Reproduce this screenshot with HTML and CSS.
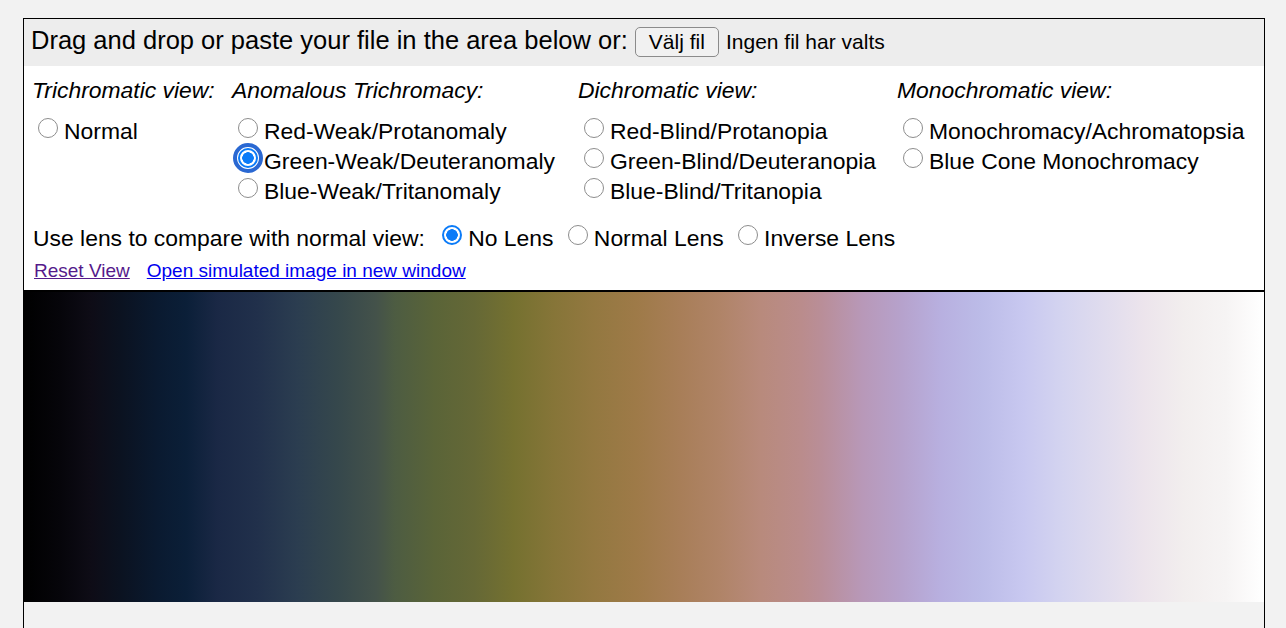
FILE: index.html
```html
<!DOCTYPE html>
<html lang="en">
<head>
<meta charset="utf-8">
<title>Color Blindness Simulator</title>
<link rel="stylesheet" href="styles.css">
</head>
<body>
<div class="app">
  <div class="drop-bar">Drag and drop or paste your file in the area below or: <button class="file-btn" type="button">Välj fil</button> <span class="file-name">Ingen fil har valts</span></div>
  <div class="controls">
    <div class="modes">
      <div class="mode-col">
        <div class="mode-title">Trichromatic view:</div>
        <label class="opt"><input class="radio" type="radio" name="mode">Normal</label>
      </div>
      <div class="mode-col">
        <div class="mode-title">Anomalous Trichromacy:</div>
        <label class="opt"><input class="radio" type="radio" name="mode">Red-Weak/Protanomaly</label>
        <label class="opt"><input class="radio focused" type="radio" name="mode" checked>Green-Weak/Deuteranomaly</label>
        <label class="opt"><input class="radio" type="radio" name="mode">Blue-Weak/Tritanomaly</label>
      </div>
      <div class="mode-col">
        <div class="mode-title">Dichromatic view:</div>
        <label class="opt"><input class="radio" type="radio" name="mode">Red-Blind/Protanopia</label>
        <label class="opt"><input class="radio" type="radio" name="mode">Green-Blind/Deuteranopia</label>
        <label class="opt"><input class="radio" type="radio" name="mode">Blue-Blind/Tritanopia</label>
      </div>
      <div class="mode-col">
        <div class="mode-title">Monochromatic view:</div>
        <label class="opt"><input class="radio" type="radio" name="mode">Monochromacy/Achromatopsia</label>
        <label class="opt"><input class="radio" type="radio" name="mode">Blue Cone Monochromacy</label>
      </div>
    </div>
    <div class="lens-row"><span class="lens-label">Use lens to compare with normal view:</span> <label class="lens-opt"><input class="radio lens-radio" type="radio" name="lens" checked>No Lens</label> <label class="lens-opt"><input class="radio lens-radio" type="radio" name="lens">Normal Lens</label> <label class="lens-opt"><input class="radio lens-radio" type="radio" name="lens">Inverse Lens</label></div>
    <div class="links"><a class="link visited" href="#reset">Reset View</a><a class="link" href="#open">Open simulated image in new window</a></div>
  </div>
  <div class="preview"></div>
</div>
</body>
</html>
```
FILE: styles.css
```css
html, body {
  margin: 0;
  padding: 0;
}
body {
  background: #f2f2f2;
  font-family: "Liberation Sans", Arial, Helvetica, sans-serif;
  color: #000;
  padding: 18px 21px 0 23px;
  overflow: hidden;
  height: 628px;
  box-sizing: border-box;
}
.app {
  border: 1px solid #000;
  border-bottom: none;
  min-height: 700px;
}
.drop-bar {
  background: #ededed;
  height: 47px;
  box-sizing: border-box;
  padding: 6.5px 0 0 7px;
  font-size: 25.5px;
  white-space: nowrap;
}
.file-btn {
  font-family: "Liberation Sans", Arial, sans-serif;
  font-size: 21px;
  line-height: normal;
  padding: 2px 13px;
  border: 1px solid #8b8b8b;
  border-radius: 5px;
  background: #f1f1f1;
  color: #000;
  margin: 0;
}
.file-name {
  font-size: 21px;
}
.controls {
  background: #fff;
  padding: 11px 0 7px 8px;
  border-bottom: 2px solid #000;
  font-size: 22.9px;
}
.modes {
  display: grid;
  grid-template-columns: 200px 346px 319px 1fr;
}
.mode-col {
  display: flex;
  flex-direction: column;
}
.mode-title {
  font-style: italic;
  line-height: 26px;
  margin-bottom: 13px;
  white-space: nowrap;
}
.opt {
  display: block;
  line-height: 30px;
  white-space: nowrap;
}
.radio {
  -webkit-appearance: none;
  appearance: none;
  width: 20px;
  height: 20px;
  box-sizing: border-box;
  border: 1px solid #8d8d8d;
  border-radius: 50%;
  background: #fff;
  margin: 0 6px 0 6px;
  vertical-align: 1px;
}
.radio:checked {
  border: 2px solid #0b7bf8;
  background: radial-gradient(circle, #0b7bf8 0 5.5px, #fff 6px);
}
.radio.focused {
  outline: 4px solid #2a68d2;
  outline-offset: 1px;
}
.lens-row {
  margin-top: 17px;
  margin-left: 1px;
  line-height: 30px;
  white-space: nowrap;
}
.lens-label {
  margin-right: 3px;
}
.lens-radio {
  margin-left: 8px;
}
.links {
  margin-top: 6px;
  margin-left: 2px;
  line-height: 24px;
  font-size: 19px;
  display: flex;
  gap: 17px;
}
.link {
  color: #0000ee;
  text-decoration: underline;
}
.link.visited {
  color: #551a8b;
}
.preview {
  height: 310px;
  background: linear-gradient(to right,
    #000000 0%,
    #06050a 2.9%,
    #0e0c16 5.4%,
    #0b1220 7.7%,
    #0a1a30 10.8%,
    #0b1f38 13.1%,
    #1a2845 15.6%,
    #21304b 18.8%,
    #2b3d50 22%,
    #35474c 25.2%,
    #44524a 28.4%,
    #4d5c42 29.9%,
    #5a6438 33.1%,
    #656836 36.3%,
    #757130 39.5%,
    #867538 42.7%,
    #937840 45.9%,
    #9e7a48 49.4%,
    #a87e58 52.9%,
    #b08468 56.2%,
    #b88a7c 59.4%,
    #ba8c8c 62.7%,
    #b98e98 64.3%,
    #b898b8 67.6%,
    #b6a2cc 70.8%,
    #b8b0e0 74%,
    #bcbce8 77.3%,
    #c8c8f0 80.6%,
    #d4d4f0 83.8%,
    #e0dcee 87.1%,
    #ece4ec 90.3%,
    #f2eeee 93.5%,
    #f6f4f4 96.9%,
    #ffffff 100%);
}
```
